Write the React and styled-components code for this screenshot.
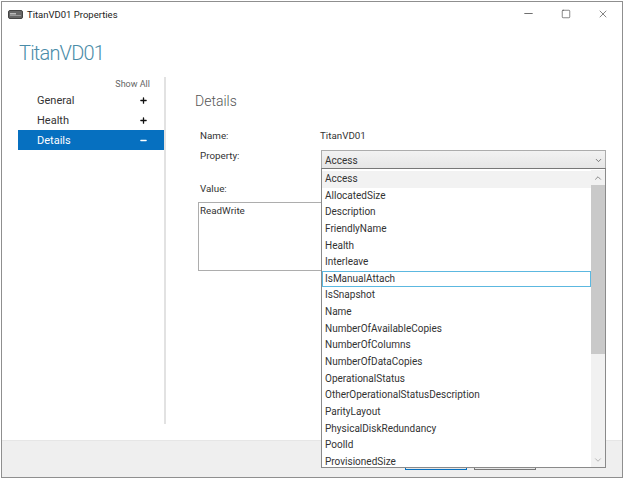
import React from "react";
import styled, { createGlobalStyle } from "styled-components";
import { ChevronDown, ChevronUp, Minus, Plus, Square, X } from "lucide-react";

const GlobalStyle = createGlobalStyle`
  html, body {
    margin: 0;
    padding: 0;
    background: #fff;
  }
  body {
    font-family: Roboto, "Open Sans", sans-serif;
    font-size: 10px;
    color: #333;
  }
`;

const Page = styled.div`
  width: 624px;
  height: 479px;
  padding: 1px;
  box-sizing: border-box;
  overflow: hidden;
`;

const Window = styled.div`
  height: 100%;
  box-sizing: border-box;
  border: 1px solid #8f8f8f;
  display: flex;
  flex-direction: column;
  background: #fff;
`;

const TitleBar = styled.div`
  height: 25px;
  flex: none;
  display: flex;
  align-items: center;
  padding: 0 0 0 6px;
`;

const TitleText = styled.span`
  margin-left: 4px;
  font-size: 9.5px;
  color: #222;
`;

const WindowButtons = styled.div`
  margin-left: auto;
  display: flex;
  align-items: center;
  gap: 26px;
  padding: 0 13px 2px 0;
  color: #333;
`;

const Heading = styled.div`
  flex: none;
  padding: 12px 0 0 17px;
  height: 50px;
  box-sizing: border-box;
  font-size: 20px;
  font-weight: 300;
  letter-spacing: -0.8px;
  line-height: 28px;
  color: #4a8ca8;
`;

const Body = styled.div`
  flex: 1;
  display: flex;
  min-height: 0;
`;

const Sidebar = styled.div`
  flex: none;
  width: 146px;
  margin-left: 16px;
  height: 347px;
  border-right: 2px solid #e2e2e2;
`;

const ShowAll = styled.div`
  height: 13px;
  line-height: 15px;
  padding-right: 14px;
  text-align: right;
  font-size: 9px;
  color: #666;
`;

const NavRow = styled.div`
  height: 20px;
  display: flex;
  align-items: center;
  justify-content: space-between;
  padding: 0 16px 0 19px;
  font-size: 11px;
  background: ${(p) => (p.$active ? "#0670c0" : "transparent")};
  color: ${(p) => (p.$active ? "#fff" : "#333")};
`;

const Content = styled.div`
  flex: 1;
  padding: 14px 0 0 29px;
  min-width: 0;
`;

const SectionTitle = styled.div`
  font-size: 14px;
  font-weight: 300;
  line-height: 20px;
  color: #555;
`;

const FormRow = styled.div`
  display: flex;
  align-items: ${(p) => p.$align || "center"};
  height: ${(p) => p.$height}px;
  margin-top: ${(p) => p.$top || 0}px;
  padding-left: 5px;
`;

const Label = styled.div`
  width: 120px;
  flex: none;
  font-size: 9.8px;
  color: #333;
`;

const ValueBox = styled.div`
  width: 300px;
  height: 69px;
  margin: 7px 0 0 3px;
  box-sizing: border-box;
  border: 1px solid #adadad;
  padding: 2px 1px;
  font-size: 9.8px;
  color: #333;
`;

const Combo = styled.div`
  position: relative;
  width: 285px;
  margin-left: 1px;
  height: 19px;
  box-sizing: border-box;
  border: 1px solid #acacac;
  border-bottom-color: #7a7a7a;
  background: linear-gradient(#f2f2f2, #e6e6e6);
  display: flex;
  align-items: center;
  justify-content: space-between;
  padding: 1px 2px 0 3px;
  font-size: 10px;
  color: #333;
`;

const Popup = styled.div`
  position: absolute;
  top: 17px;
  left: -1px;
  width: 285px;
  height: 300px;
  box-sizing: border-box;
  border: 1px solid #8a8a8a;
  border-top-color: #777;
  padding-top: 1px;
  background: #fff;
  display: flex;
  z-index: 5;
  overflow: hidden;
`;

const List = styled.div`
  flex: 1;
  min-width: 0;
  padding-top: 1px;
`;

const Item = styled.div`
  height: 16.65px;
  line-height: 16.65px;
  box-sizing: border-box;
  padding-left: 3px;
  font-size: 10px;
  color: #333;
  background: ${(p) => (p.$selected ? "#f2f2f2" : "transparent")};
  ${(p) => p.$hovered && "outline: 1px solid #5cb8e0; outline-offset: -1px;"}
`;

const Scrollbar = styled.div`
  flex: none;
  width: 14px;
  display: flex;
  flex-direction: column;
  background: #f1f1f1;
`;

const ScrollArrow = styled.div`
  height: 15px;
  flex: none;
  display: flex;
  align-items: center;
  justify-content: center;
  color: ${(p) => p.$color};
`;

const Thumb = styled.div`
  height: 169px;
  flex: none;
  background: #c9c9c9;
`;

const Track = styled.div`
  flex: 1;
`;

const Footer = styled.div`
  height: 37px;
  flex: none;
  background: #efefef;
  border-top: 1px solid #e6e6e6;
  box-sizing: border-box;
  display: flex;
  justify-content: flex-end;
  align-items: flex-start;
  gap: 7px;
  padding: 7px 86px 0 0;
`;

const FooterButton = styled.div`
  width: 62px;
  height: 22px;
  box-sizing: border-box;
  border: 1px solid ${(p) => (p.$primary ? "#0670c0" : "#777")};
  background: #e6e6e6;
`;

const items = [
  "Access",
  "AllocatedSize",
  "Description",
  "FriendlyName",
  "Health",
  "Interleave",
  "IsManualAttach",
  "IsSnapshot",
  "Name",
  "NumberOfAvailableCopies",
  "NumberOfColumns",
  "NumberOfDataCopies",
  "OperationalStatus",
  "OtherOperationalStatusDescription",
  "ParityLayout",
  "PhysicalDiskRedundancy",
  "PoolId",
  "ProvisionedSize",
];

const DiskIcon = () => (
  <svg width="15" height="9" viewBox="0 0 15 9">
    <rect x="0.5" y="0.5" width="14" height="8" rx="1.5" fill="#666" stroke="#444" />
    <rect x="2" y="3" width="6" height="1.5" fill="#bbb" />
    <rect x="2" y="5" width="11" height="1" fill="#999" />
  </svg>
);

export default function App() {
  return (
    <>
      <GlobalStyle />
      <Page>
        <Window>
          <TitleBar>
            <DiskIcon />
            <TitleText>TitanVD01 Properties</TitleText>
            <WindowButtons>
              <Minus size={13} strokeWidth={1.3} />
              <Square size={10} strokeWidth={1.4} />
              <X size={12} strokeWidth={1.2} />
            </WindowButtons>
          </TitleBar>
          <Heading>TitanVD01</Heading>
          <Body>
            <Sidebar>
              <ShowAll>Show All</ShowAll>
              <NavRow>
                General <Plus size={9} strokeWidth={3.5} color="#111" />
              </NavRow>
              <NavRow>
                Health <Plus size={9} strokeWidth={3.5} color="#111" />
              </NavRow>
              <NavRow $active>
                Details <Minus size={9} strokeWidth={3.5} color="#fff" />
              </NavRow>
            </Sidebar>
            <Content>
              <SectionTitle>Details</SectionTitle>
              <FormRow $height={16} $top={16}>
                <Label>Name:</Label>
                <Label>TitanVD01</Label>
              </FormRow>
              <FormRow $height={19} $top={7} $align="flex-start">
                <Label>Property:</Label>
                <Combo>
                  Access
                  <ChevronDown size={9} strokeWidth={2} color="#555" />
                  <Popup>
                    <List>
                      {items.map((name, i) => (
                        <Item key={name} $selected={i === 0} $hovered={name === "IsManualAttach"}>
                          {name}
                        </Item>
                      ))}
                    </List>
                    <Scrollbar>
                      <ScrollArrow $color="#777">
                        <ChevronUp size={10} strokeWidth={2} />
                      </ScrollArrow>
                      <Thumb />
                      <Track />
                      <ScrollArrow $color="#aaa">
                        <ChevronDown size={10} strokeWidth={2} />
                      </ScrollArrow>
                    </Scrollbar>
                  </Popup>
                </Combo>
              </FormRow>
              <FormRow $height={14} $top={12}>
                <Label>Value:</Label>
              </FormRow>
              <ValueBox>ReadWrite</ValueBox>
            </Content>
          </Body>
          <Footer>
            <FooterButton $primary />
            <FooterButton />
          </Footer>
        </Window>
      </Page>
    </>
  );
}
